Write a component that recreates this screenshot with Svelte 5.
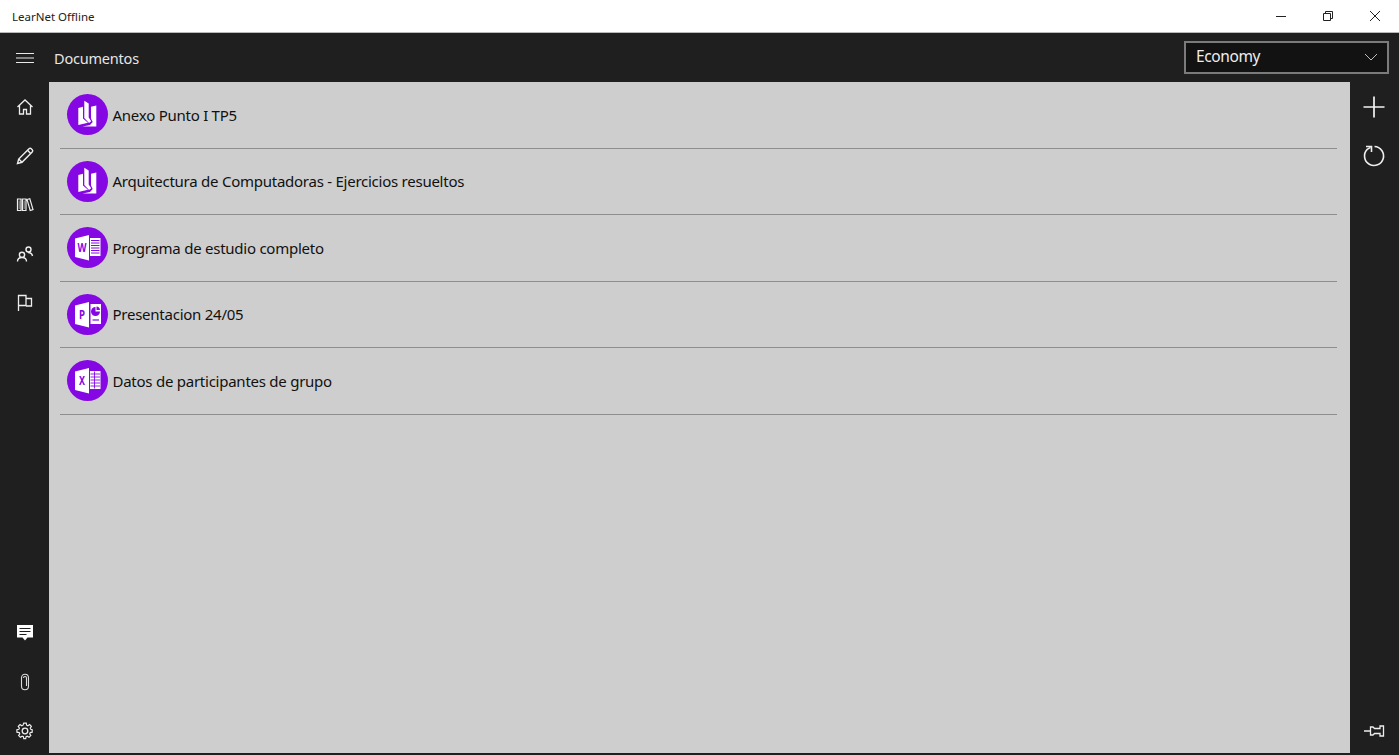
<script lang="ts">
    const docs = [
        { name: 'Anexo Punto I TP5', kind: 'pdf' },
        { name: 'Arquitectura de Computadoras - Ejercicios resueltos', kind: 'pdf' },
        { name: 'Programa de estudio completo', kind: 'word' },
        { name: 'Presentacion 24/05', kind: 'ppt' },
        { name: 'Datos de participantes de grupo', kind: 'excel' }
    ];

    const letters: Record<string, string> = { word: 'W', ppt: 'P', excel: 'X' };
</script>

<div class="window">
    <header class="titlebar">
        <span class="titlebar__name">LearNet Offline</span>
        <div class="titlebar__buttons">
            <svg width="12" height="12" viewBox="0 0 12 12" fill="none" stroke="#222" stroke-width="1"><path d="M1 6.5h10" /></svg>
            <svg width="12" height="12" viewBox="0 0 12 12" fill="none" stroke="#222" stroke-width="1"><path d="M1.5 3.5h7v7h-7z" /><path d="M3.5 3.5v-2h7v7h-2" /></svg>
            <svg width="12" height="12" viewBox="0 0 12 12" fill="none" stroke="#222" stroke-width="1"><path d="M1 1l10 10M11 1L1 11" /></svg>
        </div>
    </header>

    <div class="topbar">
        <svg class="topbar__menu" width="18" height="12" viewBox="0 0 18 12" fill="none" stroke="#e8e8e8" stroke-width="1.2"><path d="M0 1.5h18M0 6h18M0 10.5h18" /></svg>
        <span class="topbar__title">Documentos</span>
        <div class="select">
            <span class="select__value">Economy</span>
            <svg width="14" height="8" viewBox="0 0 14 8" fill="none" stroke="#bbb" stroke-width="1"><path d="M1 1l6 6 6-6" /></svg>
        </div>
    </div>

    <div class="main">
        <nav class="sidebar">
            <div class="sidebar__group">
                <div class="sidebar__item">
                    <svg width="18" height="18" viewBox="0 0 18 18" fill="none" stroke="#eee" stroke-width="1.3"><path d="M1.5 9L9 2l7.5 7M3.5 7.5V16h4v-4.500h3V16h4V7.500" /></svg>
                </div>
                <div class="sidebar__item">
                    <svg width="18" height="18" viewBox="0 0 18 18" fill="none" stroke="#eee" stroke-width="1.4"><path d="M1.500 16.500l1.200-4.500L13 1.800c.7-.7 1.600-.7 2.300 0l.9.900c.7.700.7 1.600 0 2.300L6 15.300z" /><path d="M2.700 12L6 15.300M11.500 3.300l3.200 3.200" /></svg>
                </div>
                <div class="sidebar__item">
                    <svg width="18" height="18" viewBox="0 0 18 18" fill="none" stroke="#eee" stroke-width="1.200"><path d="M1.500 3h3.500v11.500H1.500zM6.500 3h3.500v11.500H6.500zM11 3.500l2.800-.8L17 13.700l-2.800.8z" /><path d="M3.200 4.500v8.500M8.200 4.500v8.500" stroke="#999" stroke-width="1" /></svg>
                </div>
                <div class="sidebar__item">
                    <svg width="18" height="18" viewBox="0 0 18 18" fill="none" stroke="#eee" stroke-width="1.400"><circle cx="6" cy="9.800" r="2.600" /><circle cx="12.500" cy="4.500" r="2.500" /><path d="M1.500 16.500c0-2.500 1.500-4 4.500-4s4.500 1.500 4.500 4M12 7.500c2 0 4 1 4.500 3.500" /></svg>
                </div>
                <div class="sidebar__item">
                    <svg width="18" height="18" viewBox="0 0 18 18" fill="none" stroke="#eee" stroke-width="1.300"><path d="M2.500 17V1.500h7.500v10H2.500M10 4.500h5.500v7.500H10" /></svg>
                </div>
            </div>

            <div class="sidebar__group">
                <div class="sidebar__item">
                    <svg width="18" height="18" viewBox="0 0 18 18"><path fill="#fff" d="M1 1h16v12.500h-5.500L9 16.500l-2.500-3H1z" /><path stroke="#1f1f1f" stroke-width="1.100" d="M3.500 4.500h11M3.500 7.500h11M3.500 10.500h7" /></svg>
                </div>
                <div class="sidebar__item">
                    <svg width="18" height="18" viewBox="0 0 18 18" fill="none" stroke="#ddd" stroke-width="1.100"><path d="M5.500 5c0-5 7-5 7 0v8c0 5-7 5-7 0z" /><path d="M7.500 5c0-2 3-2 3 0v8" /></svg>
                </div>
                <div class="sidebar__item">
                    <svg width="18" height="18" viewBox="0 0 18 18" fill="none" stroke="#eee" stroke-width="1.300"><circle cx="9" cy="9" r="2.800" /><path d="M7.600 1h2.800l.4 2.200 1.400.6 1.900-1.300 2 2-1.300 1.900.6 1.400L17 8.200v2.800l-2.200.4-.6 1.400 1.300 1.900-2 2-1.900-1.300-1.400.6-.4 2.200H7.600l-.4-2.200-1.400-.6-1.900 1.300-2-2 1.300-1.900-.6-1.400L0 11V8.200l2.200-.4.6-1.400L1.500 4.500l2-2 1.900 1.300 1.400-.6z" transform="translate(.9 .3) scale(.9)" /></svg>
                </div>
            </div>
        </nav>

        <main class="content">
            <ul class="list">
                {#each docs as doc}
                    <li class="row">
                        <span class="badge">
                            <svg width="41" height="41" viewBox="0 0 41 41">
                                {#if doc.kind === 'pdf'}
                                    <path fill="#fff" d="M11.300 14L16 12.800V24.500L21 28.800L11.300 31z" />
                                    <path fill="#fff" d="M17.300 6.700L21.700 9.500V23.500L24.200 27.200L22 29L17.300 24z" />
                                    <path fill="#fff" d="M24 12.800L29.300 11.500V32.500H15.500L23 31L25.700 28L24 24.500z" />
                                {:else}
                                    <path fill="#fff" d="M8 11.500L22 8V33.500L8 30z" />
                                    {#if doc.kind === 'word'}
                                        <path fill="#fff" d="M23 11h10.500v18H23z" />
                                        <path stroke="#8508e4" stroke-width="1" d="M24 13.500h8.500M24 16h8.500M24 18.500h8.500M24 21h8.500M24 23.500h8.500M24 26h8.500" />
                                    {:else if doc.kind === 'ppt'}
                                        <path fill="#fff" d="M23.500 10h10.500v20h-10.500z" />
                                        <path fill="#8508e4" d="M28.500 13a4.500 4.500 0 1 0 4.500 4.500h-4.500z" />
                                        <path fill="#8508e4" d="M29.500 12.500a4 4 0 0 1 3.500 3.500h-3.500z" />
                                        <path stroke="#8508e4" stroke-width="1.200" d="M25.500 26h6.500" />
                                    {:else}
                                        <path fill="#fff" d="M23 11h10.500v18H23z" />
                                        <path stroke="#8508e4" stroke-width=".9" d="M23.500 14h9.500M23.500 17h9.500M23.500 20h9.500M23.500 23h9.500M23.500 26h9.500M27.500 11.500v17" />
                                    {/if}
                                    <text class="badge__letter" x="15" y="25" text-anchor="middle" textLength={doc.kind === 'word' ? 9 : 6} lengthAdjust="spacingAndGlyphs">{letters[doc.kind]}</text>
                                {/if}
                            </svg>
                        </span>
                        <span class="row__name">{doc.name}</span>
                    </li>
                {/each}
            </ul>
        </main>

        <aside class="actions">
            <div class="actions__group">
                <div class="actions__item">
                    <svg width="22" height="22" viewBox="0 0 22 22" fill="none" stroke="#f4f4f4" stroke-width="1.700"><path d="M11 0.500v21M0.500 11h21" /></svg>
                </div>
                <div class="actions__item">
                    <svg width="24" height="24" viewBox="0 0 24 24" fill="none" stroke="#eee" stroke-width="1.600"><path d="M12.500 2.500A9.500 9.500 0 1 1 5.200 5.400L8.500 3.300" /><path d="M4 2.500H9.500V8" /></svg>
                </div>
            </div>
            <div class="actions__item">
                <svg width="22" height="14" viewBox="0 0 22 14" fill="none" stroke="#eee" stroke-width="1.300"><path d="M1 7h6.500M7.500 3h2.500l1.500 1.500h5.500V2h3.500v10H17V9.500h-5.500L10 11H7.500z" /></svg>
            </div>
        </aside>
    </div>
</div>

<style>
    :global(body) {
        margin: 0;
        background: #1f1f1f;
    }

    .window {
        display: flex;
        flex-direction: column;
        height: 755px;
        overflow: hidden;
        font-family: "Noto Sans", "Open Sans", sans-serif;
    }

    .titlebar {
        display: flex;
        align-items: center;
        justify-content: space-between;
        height: 32px;
        padding-left: 12px;
        background: #fff;
        border-bottom: 1px solid #b9b9b9;
    }

    .titlebar__name {
        font-size: 11.500px;
        color: #222;
    }

    .titlebar__buttons {
        display: flex;
        gap: 35px;
        padding-right: 18px;
    }

    .topbar {
        display: flex;
        align-items: center;
        height: 49px;
        padding-left: 16px;
        padding-right: 10px;
        background: #1f1f1f;
    }

    .topbar__menu {
        margin-right: 20px;
    }

    .topbar__title {
        flex: 1;
        font-size: 14.500px;
        letter-spacing: -0.2px;
        color: #e6e6e6;
    }

    .select {
        display: flex;
        align-items: center;
        justify-content: space-between;
        box-sizing: border-box;
        width: 205px;
        height: 33px;
        margin-top: -1px;
        padding: 0 9px 0 10px;
        background: #121212;
        border: 2px solid #7b7b7b;
        font-size: 15.500px;
        letter-spacing: -0.4px;
        color: #eee;
    }

    .select__value {
        padding-bottom: 2px;
    }

    .main {
        display: flex;
        flex: 1;
        min-height: 0;
    }

    .sidebar {
        display: flex;
        flex-direction: column;
        justify-content: space-between;
        box-sizing: border-box;
        width: 49px;
    }

    .sidebar__item {
        display: flex;
        align-items: center;
        justify-content: center;
        height: 49px;
    }

    .content {
        flex: 1;
        margin-bottom: 2px;
        padding: 0 13px 0 11px;
        background: #cecece;
    }

    .list {
        margin: 0;
        padding: 0;
        list-style: none;
    }

    .row {
        display: flex;
        align-items: center;
        gap: 5px;
        box-sizing: border-box;
        height: 66.500px;
        padding-left: 6.500px;
        border-bottom: 1px solid #8e8e8e;
    }

    .badge {
        display: block;
        width: 41px;
        height: 41px;
        border-radius: 50%;
        background: #8508e4;
    }

    .badge svg {
        display: block;
    }

    .badge__letter {
        font-size: 12px;
        font-weight: 700;
        fill: #8508e4;
    }

    .row__name {
        font-size: 15px;
        letter-spacing: -0.25px;
        color: #111;
    }

    .actions {
        display: flex;
        flex-direction: column;
        justify-content: space-between;
        box-sizing: border-box;
        width: 49px;
        padding-right: 1px;
    }

    .actions__item {
        display: flex;
        align-items: center;
        justify-content: center;
        height: 49px;
    }
</style>
